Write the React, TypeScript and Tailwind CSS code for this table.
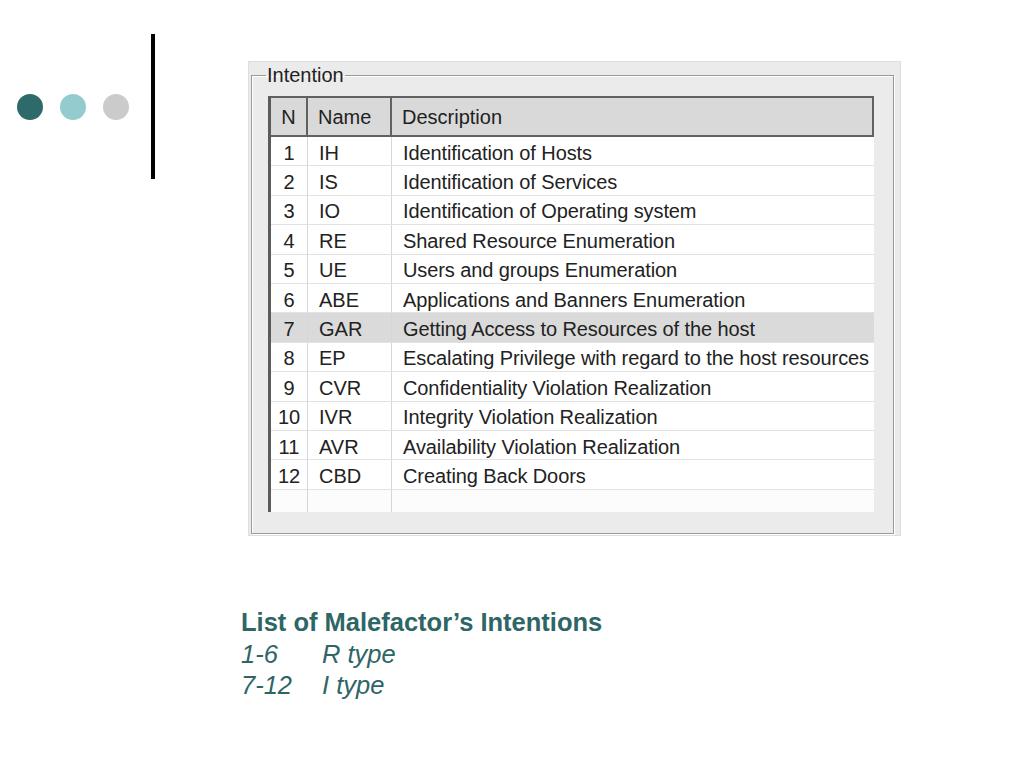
const rows: [string, string, string][] = [
  ['1', 'IH', 'Identification of Hosts'],
  ['2', 'IS', 'Identification of Services'],
  ['3', 'IO', 'Identification of Operating system'],
  ['4', 'RE', 'Shared Resource Enumeration'],
  ['5', 'UE', 'Users and groups Enumeration'],
  ['6', 'ABE', 'Applications and Banners Enumeration'],
  ['7', 'GAR', 'Getting Access to Resources of the host'],
  ['8', 'EP', 'Escalating Privilege with regard to the host resources'],
  ['9', 'CVR', 'Confidentiality Violation Realization'],
  ['10', 'IVR', 'Integrity Violation Realization'],
  ['11', 'AVR', 'Availability Violation Realization'],
  ['12', 'CBD', 'Creating Back Doors'],
];

// selected row in the list view
const SELECTED = '7';

function Decoration() {
  return (
    <div className="flex w-[248px] shrink-0 items-center pl-[17px] pt-[34px]">
      <div className="flex gap-[17px]">
        <span className="size-[26px] rounded-full bg-[#2f6a6a]" />
        <span className="size-[26px] rounded-full bg-[#93cbcf]" />
        <span className="size-[26px] rounded-full bg-[#cbcbcb]" />
      </div>
      <span className="ml-[22px] h-[145px] w-[4px] bg-black" />
    </div>
  );
}

function IntentionList() {
  return (
    <div className="flex h-[416px] flex-col border-l-[3px] border-[#5b5b5b] bg-[#fcfcfc] text-[20px] leading-none text-[#222]">
      <div className="grid h-[41px] shrink-0 grid-cols-[37px_84px_1fr] border-y-2 border-r-2 border-[#616161] bg-[#d9d9d9]">
        <div className="flex items-center justify-center border-r-2 border-[#616161]">N</div>
        <div className="flex items-center border-r-2 border-[#616161] pl-[10px]">Name</div>
        <div className="flex items-center pl-[10px]">Description</div>
      </div>
      {rows.map(([n, name, desc]) => (
        <div
          key={n}
          className={
            'grid h-[29.4px] shrink-0 grid-cols-[37px_84px_1fr] border-b border-[#e2e2e2] ' +
            (n === SELECTED ? 'bg-[#dadada]' : 'bg-white')
          }
        >
          <div className="flex items-center justify-center border-r border-[#d6d6d6] pt-[3px]">{n}</div>
          <div className="flex items-center border-r border-[#d6d6d6] pl-[11px] pt-[3px]">{name}</div>
          <div className="flex items-center whitespace-nowrap pl-[11px] pt-[3px] tracking-[-0.1px]">{desc}</div>
        </div>
      ))}
      <div className="grid flex-1 grid-cols-[37px_84px_1fr]">
        <div className="border-r border-[#d6d6d6]" />
        <div className="border-r border-[#d6d6d6]" />
        <div />
      </div>
    </div>
  );
}

export default function App() {
  return (
    <div className="flex h-[768px] w-[1024px] flex-col bg-white font-['Liberation_Sans',Arial,sans-serif]">
      <div className="flex items-start">
        <Decoration />
        <div className="mt-[61px] h-[475px] w-[653px] border border-[#dedede] bg-[#ebebeb] pb-[1px] pl-[2px] pr-[6px] pt-[2px]">
          <fieldset className="h-full border border-[#9a9a9a] pb-[20px] pl-[16px] pr-[19px] shadow-[inset_1px_1px_0_#fff,1px_1px_0_#fff]">
            <legend className="-ml-[2px] px-[1px] text-[20px] leading-[22px] text-[#222]">Intention</legend>
            <div className="mt-[10px]">
              <IntentionList />
            </div>
          </fieldset>
        </div>
      </div>
      <div className="ml-[241px] mt-[71px] text-[25.5px] leading-[31.5px] text-[#2e6666]">
        <p className="font-bold">List of Malefactor’s Intentions</p>
        <div className="grid grid-cols-[81px_auto] italic">
          <span>1-6</span>
          <span>R type</span>
          <span>7-12</span>
          <span>I type</span>
        </div>
      </div>
    </div>
  );
}
